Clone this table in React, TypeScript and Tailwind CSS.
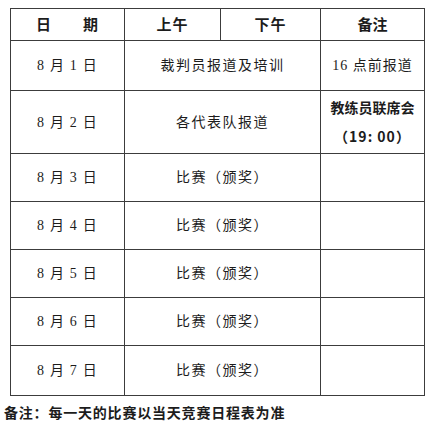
import React from "react";

const rows = [
  { date: "8 月 1 日", plan: "裁判员报道及培训", note: "16 点前报道", h: "h-[50px]" },
  { date: "8 月 2 日", plan: "各代表队报道", note: "meeting", h: "h-[63px]" },
  { date: "8 月 3 日", plan: "比赛（颁奖）", note: "", h: "h-[48px]" },
  { date: "8 月 4 日", plan: "比赛（颁奖）", note: "", h: "h-[48px]" },
  { date: "8 月 5 日", plan: "比赛（颁奖）", note: "", h: "h-[48px]" },
  { date: "8 月 6 日", plan: "比赛（颁奖）", note: "", h: "h-[48px]" },
  { date: "8 月 7 日", plan: "比赛（颁奖）", note: "", h: "h-[50px]" },
];

const serif = "font-['Liberation_Serif','Noto_Sans_CJK_SC',serif]";
const sans = "font-['Noto_Sans_CJK_SC',sans-serif]";

export default function App() {
  return (
    <div className="w-[432px] h-[426px] bg-white pt-[8px] pl-[10px] text-[#1c1c1c]">
      <table className="table-fixed border-collapse w-[414px] border-[1.5px] border-[#3c3c3c]">
        <colgroup>
          <col className="w-[114px]" />
          <col className="w-[96px]" />
          <col className="w-[100px]" />
          <col className="w-[104px]" />
        </colgroup>
        <thead>
          <tr className={`h-[32px] ${sans} font-bold text-[15px]`}>
            <th className="border-[1.5px] border-[#3c3c3c] p-0">
              <div className="flex justify-between pl-[25px] pr-[26px]">
                <span>日</span>
                <span>期</span>
              </div>
            </th>
            <th className="border-[1.5px] border-[#3c3c3c] p-0 tracking-[1px]">上午</th>
            <th className="border-[1.5px] border-[#3c3c3c] p-0 tracking-[1px]">下午</th>
            <th className="border-[1.5px] border-[#3c3c3c] p-0">备注</th>
          </tr>
        </thead>
        <tbody>
          {rows.map((r) => (
            <tr key={r.date} className={`${r.h} ${serif} text-[14px]`}>
              <td className="border-[1.5px] border-[#3c3c3c] p-0 text-center whitespace-pre tracking-[1.2px]">
                {r.date}
              </td>
              <td colSpan={2} className="border-[1.5px] border-[#3c3c3c] p-0 text-center tracking-[1.5px]">
                {r.plan}
              </td>
              <td className="border-[1.5px] border-[#3c3c3c] p-0 text-center">
                {r.note === "meeting" ? (
                  <div className={`flex flex-col items-center gap-[8px] ${sans} font-bold text-[14px]`}>
                    <span>教练员联席会</span>
                    <span className="whitespace-pre tracking-[1px]">（19: 00）</span>
                  </div>
                ) : (
                  <span className="tracking-[1px]">{r.note}</span>
                )}
              </td>
            </tr>
          ))}
        </tbody>
      </table>
      <p className={`-ml-[6px] mt-[6px] ${sans} font-bold text-[14px] tracking-[0.8px]`}>
        备注：每一天的比赛以当天竞赛日程表为准
      </p>
    </div>
  );
}
